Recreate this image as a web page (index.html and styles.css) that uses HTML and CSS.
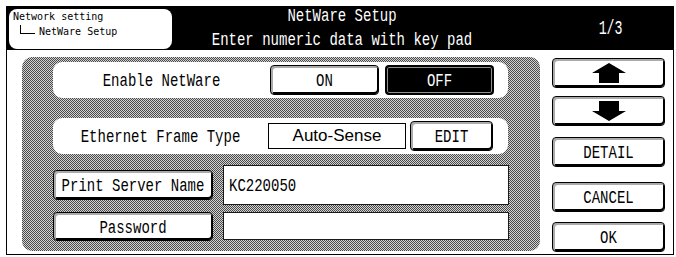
FILE: index.html
```html
<!DOCTYPE html>
<html>
<head>
<meta charset="utf-8">
<link rel="stylesheet" href="styles.css">
</head>
<body>
<div class="screen">
  <header class="hdr">
    <div class="crumb">
      <div class="crumb-line">Network setting</div>
      <div class="crumb-line crumb-l2"><span class="tree"></span>NetWare Setup</div>
    </div>
    <div class="title">
      <div class="title-line"><span class="tx">NetWare Setup</span></div>
      <div class="title-line"><span class="tx">Enter numeric data with key pad</span></div>
    </div>
    <div class="page"><span class="tx-lg">1/3</span></div>
  </header>
  <main class="frame">
    <section class="panel">
      <div class="row row-1">
        <div class="row-label"><span class="tx">Enable NetWare</span></div>
        <div class="btn btn-opt"><span class="tx">ON</span></div>
        <div class="btn btn-opt btn-sel"><span class="tx">OFF</span></div>
      </div>
      <div class="row row-2">
        <div class="row-label row-label-2"><span class="tx">Ethernet Frame Type</span></div>
        <div class="value-box">Auto-Sense</div>
        <div class="btn btn-edit"><span class="tx">EDIT</span></div>
      </div>
      <div class="field-row field-row-tall">
        <div class="btn btn-field"><span class="tx">Print Server Name</span></div>
        <div class="input input-tall"><span class="tx">KC220050</span></div>
      </div>
      <div class="field-row field-row-short">
        <div class="btn btn-field btn-short"><span class="tx">Password</span></div>
        <div class="input input-short"></div>
      </div>
    </section>
    <aside class="side">
      <div class="btn side-btn">
        <svg class="arrow" width="34" height="20" viewBox="0 0 34 20"><path d="M17 0 L34 10 L27 10 L27 20 L7 20 L7 10 L0 10 Z" fill="#000"/></svg>
      </div>
      <div class="btn side-btn side-down">
        <svg class="arrow" width="34" height="20" viewBox="0 0 34 20"><path d="M17 20 L34 10 L27 10 L27 0 L7 0 L7 10 L0 10 Z" fill="#000"/></svg>
      </div>
      <div class="btn side-btn side-detail"><span class="tx">DETAIL</span></div>
      <div class="btn side-btn side-cancel"><span class="tx">CANCEL</span></div>
      <div class="btn side-btn side-ok"><span class="tx">OK</span></div>
    </aside>
  </main>
</div>
</body>
</html>
```
FILE: styles.css
```css
* { box-sizing: border-box; }

body {
  margin: 0;
  background: #fff;
  color: #000;
  font-family: "Liberation Mono", "DejaVu Sans Mono", monospace;
  font-size: 14px;
}

.tx {
  display: inline-block;
  white-space: pre;
  transform: translateY(1px) scaleY(1.3);
}

.screen {
  width: 668px;
  margin: 6px 0 0 6px;
}

/* header */
.hdr {
  display: flex;
  height: 44px;
  background: #000;
  padding-left: 3px;
}

.crumb {
  width: 163px;
  height: 40px;
  margin-top: 3px;
  background: #fff;
  border-radius: 8px;
  padding: 1px 0 0 4px;
  font-family: "DejaVu Sans Mono", monospace;
  font-size: 10px;
  line-height: 14px;
}

.crumb-line { white-space: pre; }

.crumb-l2 {
  margin-top: 1px;
  padding-left: 7px;
}

.tree {
  display: inline-block;
  width: 15px;
  height: 9px;
  margin-right: 4px;
  border-left: 1px solid #000;
  border-bottom: 1px solid #000;
  vertical-align: 1px;
}

.title {
  width: 340px;
  display: flex;
  flex-direction: column;
  justify-content: space-between;
  color: #fff;
  line-height: 20px;
}

.title-line {
  height: 20px;
  display: flex;
  justify-content: center;
}

.title-line .tx { transform: scaleY(1.3); }

.page {
  flex: 1;
  display: flex;
  align-items: center;
  justify-content: center;
  padding-left: 36px;
  color: #fff;
}

.tx-lg {
  display: inline-block;
  transform: scale(0.95, 1.5);
}

/* main frame */
.frame {
  display: flex;
  gap: 12px;
  height: 205px;
  border: 1px solid #000;
  border-top: 0;
  padding: 7px 8px 0 15px;
}

.panel {
  width: 518px;
  height: 194px;
  flex-shrink: 0;
  border-radius: 10px;
  background: repeating-conic-gradient(#4a4a4a 0% 25%, #d2d2d2 0% 50%) 0 0 / 2px 2px;
  padding: 5px 32px 0 31px;
  display: flex;
  flex-direction: column;
}

.row {
  display: flex;
  align-items: center;
  height: 36px;
  flex-shrink: 0;
  background: #fff;
  border-radius: 9px;
}

.row-1 { padding-right: 14px; }
.row-2 { margin-top: 20px; padding-right: 15px; }

.row-label {
  width: 217px;
  flex-shrink: 0;
  display: flex;
  justify-content: center;
  align-items: center;
}

.row-label-2 { width: 215px; }

/* buttons */
.btn {
  display: flex;
  align-items: center;
  justify-content: center;
  flex-shrink: 0;
  background: #fff;
  border: 1px solid #000;
  border-radius: 4px;
  box-shadow: inset 2px 2px 0 #ababab, inset -1px -2px 0 #000;
}

.btn-opt { width: 109px; height: 30px; }

.btn-sel {
  margin-left: 6px;
  background: #000;
  color: #fff;
  border: 2px solid #000;
  box-shadow: inset 0 0 0 1px #8f8f8f;
}

.value-box {
  width: 138px;
  height: 26px;
  flex-shrink: 0;
  margin-right: 4px;
  border: 1px solid #000;
  display: flex;
  align-items: center;
  justify-content: center;
  font-family: "Liberation Sans", Arial, sans-serif;
  font-size: 17px;
}

.btn-edit { width: 83px; height: 30px; }

.field-row {
  display: flex;
  gap: 10px;
  flex-shrink: 0;
}

.field-row-tall {
  height: 40px;
  margin-top: 11px;
  align-items: center;
}

.field-row-short {
  height: 29px;
  margin-top: 7px;
  align-items: flex-start;
}

.btn-field { width: 160px; height: 30px; }
.btn-short { height: 29px; }

.input {
  width: 286px;
  flex-shrink: 0;
  background: #fff;
  border: 1px solid #1a1a1a;
  display: flex;
  align-items: center;
  padding-left: 5px;
}

.input-tall { height: 40px; }
.input-short { height: 28px; }

/* side column */
.side {
  width: 113px;
  flex-shrink: 0;
  display: flex;
  flex-direction: column;
  padding-top: 1px;
}

.side-btn { width: 113px; height: 30px; }
.side-down { margin-top: 8px; }
.side-detail { margin-top: 11px; }
.side-cancel { margin-top: 15px; }
.side-ok { margin-top: 10px; }

.arrow { display: block; }
```
